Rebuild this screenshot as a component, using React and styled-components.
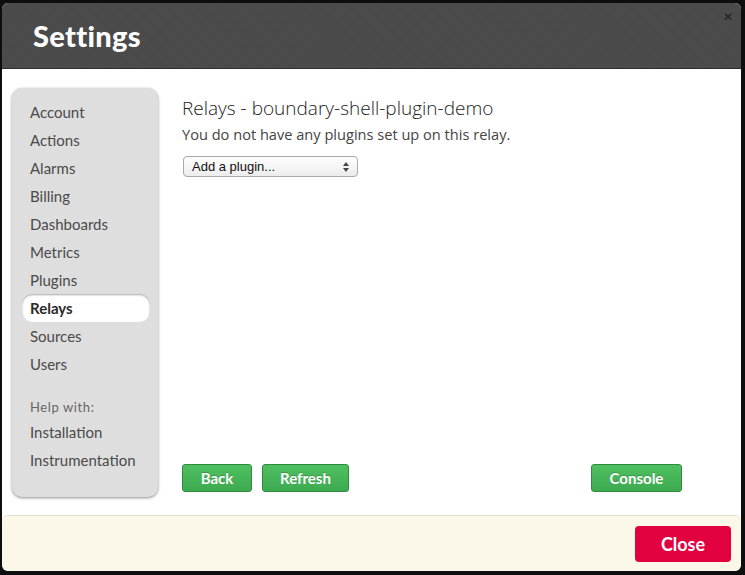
import React, { useState } from 'react';
import styled, { createGlobalStyle } from 'styled-components';

const GlobalStyle = createGlobalStyle`
  html, body {
    margin: 0;
    padding: 0;
    background: #0e0e0e;
  }
  body {
    font-family: Lato, "Open Sans", sans-serif;
  }
`;

const Modal = styled.div`
  margin: 3px 4px 0 2px;
  width: 739px;
  height: 568px;
  border-radius: 6px;
  overflow: hidden;
  display: flex;
  flex-direction: column;
  background: #fff;
`;

const Header = styled.div`
  position: relative;
  height: 65px;
  flex-shrink: 0;
  background-color: #4a4a4a;
  background-image:
    repeating-linear-gradient(45deg, rgba(255,255,255,0.012) 0 1px, transparent 1px 2px),
    repeating-linear-gradient(-45deg, rgba(0,0,0,0.02) 0 1px, transparent 1px 2px);
  display: flex;
  align-items: center;
  padding-left: 31px;
  border-bottom: 1px solid #2e2e2e;
`;

const Title = styled.h1`
  margin: 0;
  color: #fff;
  font-family: Lato, sans-serif;
  font-weight: 900;
  font-size: 29px;
  letter-spacing: 0.3px;
`;

const CloseX = styled.button`
  position: absolute;
  top: 7px;
  right: 8px;
  border: 0;
  background: none;
  padding: 0;
  color: #1e1e1e;
  font-family: "DejaVu Sans", sans-serif;
  font-size: 12px;
  cursor: pointer;
`;

const Body = styled.div`
  flex: 1;
  display: flex;
  gap: 24px;
  padding: 19px 59px 0 10px;
  background: #fff;
`;

const Sidebar = styled.div`
  width: 146px;
  height: 409px;
  box-sizing: border-box;
  padding: 10px 8px 0 10px;
  background: #dedede;
  border-radius: 10px;
  box-shadow: 0 1px 3px rgba(0, 0, 0, 0.45);
  display: flex;
  flex-direction: column;
`;

const NavItem = styled.div`
  height: 28px;
  line-height: 28px;
  padding-left: 8px;
  border-radius: 10px;
  font-size: 15px;
  cursor: pointer;
  background: ${p => (p.$active ? '#fff' : 'transparent')};
  font-weight: ${p => (p.$active ? 700 : 400)};
  color: ${p => (p.$active ? '#2a2a2a' : '#4a4a4a')};
  box-shadow: ${p => (p.$active ? 'inset 0 1px 2px rgba(0,0,0,0.35)' : 'none')};
`;

const HelpLabel = styled.div`
  margin-top: 18px;
  height: 22px;
  line-height: 22px;
  padding-left: 8px;
  font-size: 13px;
  letter-spacing: 0.6px;
  color: #666;
`;

const Content = styled.div`
  flex: 1;
  display: flex;
  flex-direction: column;
  padding-top: 9px;
  padding-bottom: 23px;
`;

const Heading = styled.h2`
  margin: 0;
  font-family: "Open Sans", sans-serif;
  font-weight: 300;
  font-size: 19px;
  line-height: 22px;
  color: #222;
`;

const Note = styled.p`
  margin: 5px 0 0;
  font-family: "Open Sans", sans-serif;
  font-size: 14.6px;
  line-height: 20px;
  color: #444;
`;

const Select = styled.div`
  margin-top: 12px;
  margin-left: 1px;
  width: 175px;
  height: 21px;
  box-sizing: border-box;
  border: 1px solid #a9a9a9;
  border-radius: 4px;
  background: linear-gradient(#ffffff, #ececec);
  display: flex;
  align-items: center;
  justify-content: space-between;
  padding: 0 8px 0 8px;
  font-family: "Liberation Sans", sans-serif;
  font-size: 13px;
  color: #111;
`;

const Spacer = styled.div`
  flex: 1;
`;

const ButtonRow = styled.div`
  display: flex;
  gap: 10px;
`;

const GreenButton = styled.button`
  height: 28px;
  width: ${p => p.$w}px;
  margin-left: ${p => (p.$push ? 'auto' : '0')};
  border: 1px solid #2f8a3e;
  border-radius: 3px;
  background: linear-gradient(#4fc062, #3daa4f);
  color: #fff;
  font-family: Lato, sans-serif;
  font-weight: 700;
  font-size: 15px;
  text-shadow: 0 -1px 0 rgba(0, 0, 0, 0.2);
  cursor: pointer;
`;

const Footer = styled.div`
  height: 56px;
  flex-shrink: 0;
  box-sizing: border-box;
  background: #fbf8e9;
  border-top: 1px solid #e3dfcc;
  border-radius: 6px;
  display: flex;
  align-items: center;
  justify-content: flex-end;
  padding-right: 10px;
`;

const CloseButton = styled.button`
  width: 96px;
  height: 36px;
  border: 0;
  border-radius: 4px;
  background: #e3003f;
  color: #fff;
  font-family: Lato, sans-serif;
  font-weight: 700;
  font-size: 18px;
  cursor: pointer;
`;

const SelectArrows = () => (
  <svg width="6" height="10" viewBox="0 0 6 10">
    <path d="M0 4 L3 0 L6 4 Z M0 6 L3 10 L6 6 Z" fill="#444" />
  </svg>
);

const navItems = ['Account', 'Actions', 'Alarms', 'Billing', 'Dashboards', 'Metrics', 'Plugins', 'Relays', 'Sources', 'Users'];
const helpItems = ['Installation', 'Instrumentation'];

export default function App() {
  const [active, setActive] = useState('Relays');

  return (
    <>
      <GlobalStyle />
      <Modal>
        <Header>
          <Title>Settings</Title>
          <CloseX>✕</CloseX>
        </Header>
        <Body>
          <Sidebar>
            {navItems.map(item => (
              <NavItem key={item} $active={active === item} onClick={() => setActive(item)}>
                {item}
              </NavItem>
            ))}
            <HelpLabel>Help with:</HelpLabel>
            {helpItems.map(item => (
              <NavItem key={item}>{item}</NavItem>
            ))}
          </Sidebar>
          <Content>
            <Heading>Relays - boundary-shell-plugin-demo</Heading>
            <Note>You do not have any plugins set up on this relay.</Note>
            <Select>
              <span>Add a plugin...</span>
              <SelectArrows />
            </Select>
            <Spacer />
            <ButtonRow>
              <GreenButton $w={70}>Back</GreenButton>
              <GreenButton $w={87}>Refresh</GreenButton>
              <GreenButton $w={91} $push>Console</GreenButton>
            </ButtonRow>
          </Content>
        </Body>
        <Footer>
          <CloseButton>Close</CloseButton>
        </Footer>
      </Modal>
    </>
  );
}
